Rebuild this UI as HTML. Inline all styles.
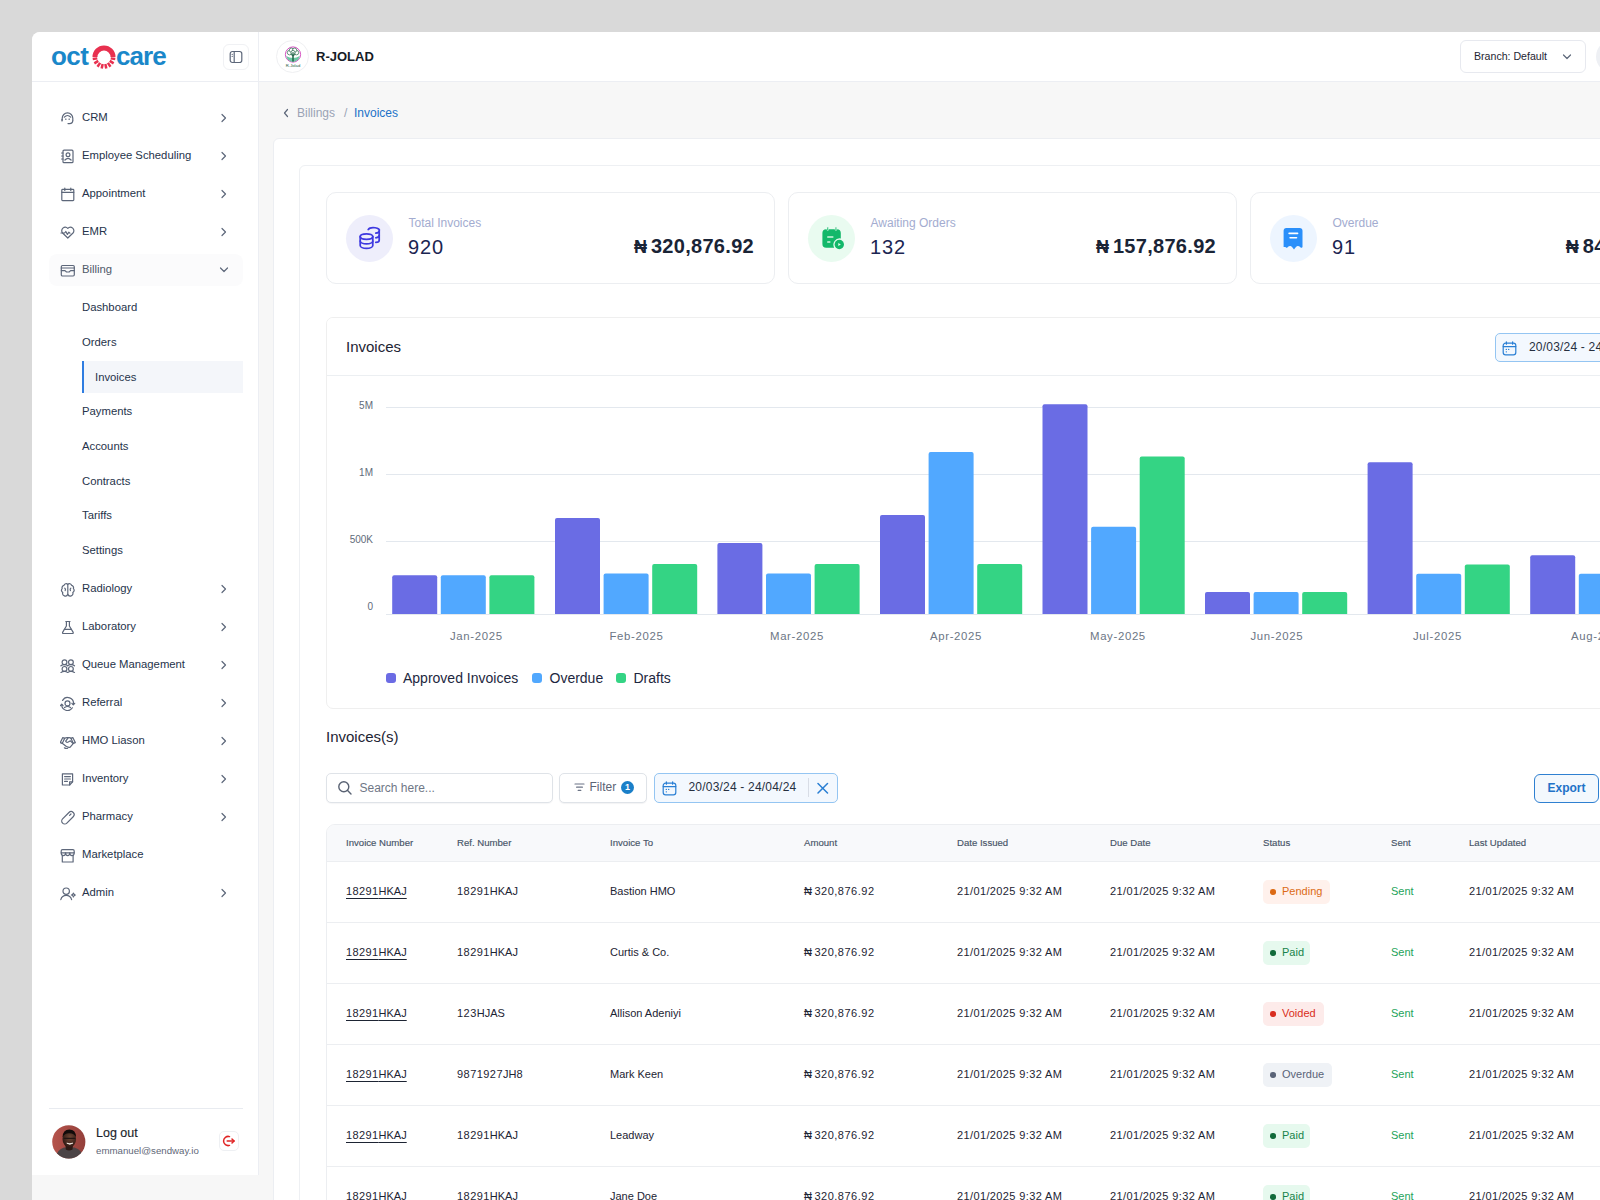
<!DOCTYPE html>
<html><head><meta charset="utf-8">
<style>
*{box-sizing:border-box;margin:0;padding:0}
html,body{width:1600px;height:1200px;overflow:hidden;background:#d9d9d9;font-family:"Liberation Sans",sans-serif;color:#1f2a3d}
body{position:relative}
.abs{position:absolute}
.t{position:absolute;white-space:nowrap;line-height:14px}
</style></head><body>

<div class="abs" style="left:32px;top:32px;width:1568px;height:1168px;background:#f7f7f7;border-top-left-radius:8px"></div>
<div class="abs" style="left:32px;top:32px;width:227px;height:1143px;background:#fff;border-right:1px solid #eceef3;border-top-left-radius:8px"></div>
<div class="abs" style="left:32px;top:81px;width:226px;height:1px;background:#eceef3"></div>
<div class="abs" style="left:259px;top:32px;width:1341px;height:50px;background:#fff;border-bottom:1px solid #eceef3"></div>
<div class="t" style="left:51px;top:43px;line-height:26px;font-size:26px;font-weight:bold;color:#1a87c9;letter-spacing:-0.6px">oct</div>
<div class="t" style="left:116px;top:43px;line-height:26px;font-size:26px;font-weight:bold;color:#1a87c9;letter-spacing:-0.9px">care</div>
<svg class="abs" style="left:92px;top:45px" width="24" height="24" viewBox="-12 -12 24 24"><path d="M-9 0 A9 9 0 0 1 9 0" stroke="#e8304f" stroke-width="5" fill="none"/><g><line x1="6.72" y1="1.36" x2="11.26" y2="2.08" stroke="#e8304f" stroke-width="2.5"/><line x1="5.76" y1="3.92" x2="9.65" y2="6.37" stroke="#e8304f" stroke-width="2.5"/><line x1="3.87" y1="5.89" x2="6.49" y2="9.67" stroke="#e8304f" stroke-width="2.5"/><line x1="1.36" y1="6.96" x2="2.29" y2="11.47" stroke="#e8304f" stroke-width="2.5"/><line x1="-1.36" y1="6.96" x2="-2.29" y2="11.47" stroke="#e8304f" stroke-width="2.5"/><line x1="-3.87" y1="5.89" x2="-6.49" y2="9.67" stroke="#e8304f" stroke-width="2.5"/><line x1="-5.76" y1="3.92" x2="-9.65" y2="6.37" stroke="#e8304f" stroke-width="2.5"/><line x1="-6.72" y1="1.36" x2="-11.26" y2="2.08" stroke="#e8304f" stroke-width="2.5"/></g></svg>
<div class="abs" style="left:223px;top:44px;width:26px;height:26px;border:1px solid #f0f1f4;border-radius:6px;background:#fff"></div>
<svg class="abs" style="left:229px;top:50px" width="14" height="14" viewBox="0 0 14 14" fill="none" stroke="#5d677a" stroke-width="1.2" stroke-linecap="round" stroke-linejoin="round" stroke-width="1.3" style="left:229px;top:50px" ><rect x="1.2" y="1.5" width="11.6" height="11" rx="2.2"/><line x1="5.2" y1="1.5" x2="5.2" y2="12.5"/><line x1="3.2" y1="4.3" x2="3.2" y2="4.4"/><line x1="3.2" y1="6.3" x2="3.2" y2="6.4"/></svg>
<div class="abs" style="left:49px;top:254px;width:194px;height:32px;border-radius:8px;background:#fbfbfc"></div>
<div class="t" style="left:82px;top:110px;font-size:11.3px;color:#26334b">CRM</div>
<svg class="abs" style="left:59.5px;top:110.8px" width="16" height="15" viewBox="0 0 16 15" fill="none" stroke="#5d677a" stroke-width="1.2" stroke-linecap="round" stroke-linejoin="round" ><path d="M2.2 9.2 V7.2 A5.3 5.3 0 0 1 12.8 7.2 V9.2"/><path d="M4.3 6.2 Q7.5 2.8 10.7 6.2"/><path d="M12.8 9.6 Q12.8 12.6 9.5 12.6 H8"/><path d="M2 8.5 V10"/><line x1="5.6" y1="8.2" x2="6" y2="8.2"/><line x1="9" y1="8.2" x2="9.4" y2="8.2"/></svg>
<svg class="abs" style="left:219px;top:112.5px" width="10" height="10" viewBox="0 0 10 10" fill="none" stroke="#5d677a" stroke-width="1.2" stroke-linecap="round" stroke-linejoin="round" stroke="#959cab" stroke-width="1.1"><path d="M3 1.5 L6.5 5 L3 8.5"/></svg>
<div class="t" style="left:82px;top:148px;font-size:11.3px;color:#26334b">Employee Scheduling</div>
<svg class="abs" style="left:59.5px;top:148.8px" width="16" height="15" viewBox="0 0 16 15" fill="none" stroke="#5d677a" stroke-width="1.2" stroke-linecap="round" stroke-linejoin="round" ><rect x="3" y="1.2" width="10" height="12.5" rx="1"/><circle cx="8" cy="5.8" r="1.9"/><path d="M4.9 11 Q8 7.6 11.1 11"/><line x1="1.6" y1="4" x2="3" y2="4"/><line x1="1.6" y1="7" x2="3" y2="7"/><line x1="1.6" y1="10" x2="3" y2="10"/></svg>
<svg class="abs" style="left:219px;top:150.5px" width="10" height="10" viewBox="0 0 10 10" fill="none" stroke="#5d677a" stroke-width="1.2" stroke-linecap="round" stroke-linejoin="round" stroke="#959cab" stroke-width="1.1"><path d="M3 1.5 L6.5 5 L3 8.5"/></svg>
<div class="t" style="left:82px;top:186px;font-size:11.3px;color:#26334b">Appointment</div>
<svg class="abs" style="left:59.5px;top:186.8px" width="16" height="15" viewBox="0 0 16 15" fill="none" stroke="#5d677a" stroke-width="1.2" stroke-linecap="round" stroke-linejoin="round" ><rect x="1.8" y="2.4" width="12" height="11.2" rx="0.8"/><line x1="1.8" y1="5.3" x2="13.8" y2="5.3"/><line x1="4.8" y1="1" x2="4.8" y2="3.4"/><line x1="10.8" y1="1" x2="10.8" y2="3.4"/></svg>
<svg class="abs" style="left:219px;top:188.5px" width="10" height="10" viewBox="0 0 10 10" fill="none" stroke="#5d677a" stroke-width="1.2" stroke-linecap="round" stroke-linejoin="round" stroke="#959cab" stroke-width="1.1"><path d="M3 1.5 L6.5 5 L3 8.5"/></svg>
<div class="t" style="left:82px;top:224px;font-size:11.3px;color:#26334b">EMR</div>
<svg class="abs" style="left:59.5px;top:224.8px" width="16" height="15" viewBox="0 0 16 15" fill="none" stroke="#5d677a" stroke-width="1.2" stroke-linecap="round" stroke-linejoin="round" ><path d="M7.8 13 L2.6 8 A3.2 3.2 0 0 1 7.8 3.4 A3.2 3.2 0 0 1 13 8 Z"/><path d="M1 8 H4.6 L5.8 6.5 L7.4 9.4 L8.8 7.2 L10 8.2"/></svg>
<svg class="abs" style="left:219px;top:226.5px" width="10" height="10" viewBox="0 0 10 10" fill="none" stroke="#5d677a" stroke-width="1.2" stroke-linecap="round" stroke-linejoin="round" stroke="#959cab" stroke-width="1.1"><path d="M3 1.5 L6.5 5 L3 8.5"/></svg>
<div class="t" style="left:82px;top:262px;font-size:11.3px;color:#4f5969">Billing</div>
<svg class="abs" style="left:59.5px;top:262.8px" width="16" height="15" viewBox="0 0 16 15" fill="none" stroke="#5d677a" stroke-width="1.2" stroke-linecap="round" stroke-linejoin="round" ><rect x="1.3" y="2.5" width="13" height="10.5" rx="1.2"/><line x1="1.3" y1="5" x2="14.3" y2="5"/><path d="M1.3 7.6 H5 L6.5 9 H9.1 L10.6 7.6 H14.3"/></svg>
<svg class="abs" style="left:219px;top:265px" width="10" height="10" viewBox="0 0 10 10" fill="none" stroke="#5d677a" stroke-width="1.2" stroke-linecap="round" stroke-linejoin="round" stroke="#959cab" stroke-width="1.1"><path d="M1.5 3 L5 6.5 L8.5 3"/></svg>
<div class="t" style="left:82px;top:581px;font-size:11.3px;color:#26334b">Radiology</div>
<svg class="abs" style="left:59.5px;top:581.8px" width="16" height="15" viewBox="0 0 16 15" fill="none" stroke="#5d677a" stroke-width="1.2" stroke-linecap="round" stroke-linejoin="round" ><path d="M7.8 2.4 A2.2 2.2 0 0 0 4 3.4 A2.4 2.4 0 0 0 2.2 6.6 A2.4 2.4 0 0 0 2.8 10.5 A2.4 2.4 0 0 0 7.8 12.3 Z"/><path d="M7.8 2.4 A2.2 2.2 0 0 1 11.6 3.4 A2.4 2.4 0 0 1 13.4 6.6 A2.4 2.4 0 0 1 12.8 10.5 A2.4 2.4 0 0 1 7.8 12.3"/><path d="M4.8 6.2 Q6 7 5.2 8.6"/><path d="M10.8 6.2 Q9.6 7 10.4 8.6"/></svg>
<svg class="abs" style="left:219px;top:583.5px" width="10" height="10" viewBox="0 0 10 10" fill="none" stroke="#5d677a" stroke-width="1.2" stroke-linecap="round" stroke-linejoin="round" stroke="#959cab" stroke-width="1.1"><path d="M3 1.5 L6.5 5 L3 8.5"/></svg>
<div class="t" style="left:82px;top:619px;font-size:11.3px;color:#26334b">Laboratory</div>
<svg class="abs" style="left:59.5px;top:619.8px" width="16" height="15" viewBox="0 0 16 15" fill="none" stroke="#5d677a" stroke-width="1.2" stroke-linecap="round" stroke-linejoin="round" ><path d="M5.8 1.5 H10 M6.4 1.5 V6 L2.6 12.4 A0.8 0.8 0 0 0 3.2 13.5 H12.6 A0.8 0.8 0 0 0 13.2 12.4 L9.4 6 V1.5"/><line x1="4.4" y1="9.4" x2="11.4" y2="9.4"/></svg>
<svg class="abs" style="left:219px;top:621.5px" width="10" height="10" viewBox="0 0 10 10" fill="none" stroke="#5d677a" stroke-width="1.2" stroke-linecap="round" stroke-linejoin="round" stroke="#959cab" stroke-width="1.1"><path d="M3 1.5 L6.5 5 L3 8.5"/></svg>
<div class="t" style="left:82px;top:657px;font-size:11.3px;color:#26334b">Queue Management</div>
<svg class="abs" style="left:59.5px;top:657.8px" width="16" height="15" viewBox="0 0 16 15" fill="none" stroke="#5d677a" stroke-width="1.2" stroke-linecap="round" stroke-linejoin="round" ><circle cx="4.5" cy="4.2" r="2.4"/><circle cx="10.9" cy="4.2" r="2.4"/><circle cx="4.5" cy="10.9" r="2.4"/><circle cx="10.9" cy="10.9" r="2.4"/><path d="M0.9 7.8 Q2.6 6.4 4.5 6.6 Q6.4 6.4 7.7 7.8 Q9 6.4 10.9 6.6 Q12.8 6.4 14.5 7.8"/><path d="M0.9 14.6 Q2.6 13.2 4.5 13.3 Q6.4 13.2 7.7 14.6 Q9 13.2 10.9 13.3 Q12.8 13.2 14.5 14.6"/></svg>
<svg class="abs" style="left:219px;top:659.5px" width="10" height="10" viewBox="0 0 10 10" fill="none" stroke="#5d677a" stroke-width="1.2" stroke-linecap="round" stroke-linejoin="round" stroke="#959cab" stroke-width="1.1"><path d="M3 1.5 L6.5 5 L3 8.5"/></svg>
<div class="t" style="left:82px;top:695px;font-size:11.3px;color:#26334b">Referral</div>
<svg class="abs" style="left:59.5px;top:695.8px" width="16" height="15" viewBox="0 0 16 15" fill="none" stroke="#5d677a" stroke-width="1.2" stroke-linecap="round" stroke-linejoin="round" ><circle cx="7.5" cy="7.4" r="2.5"/><path d="M4.5 11.6 Q7.5 9.4 10.5 11.6"/><path d="M2.6 4.4 A5.8 5.8 0 0 1 13.3 8.5"/><path d="M11.9 7.3 L13.3 8.9 L14.7 7.3"/><path d="M1.7 8.5 A5.8 5.8 0 0 0 12.4 11.8"/><path d="M0.4 9.7 L1.7 8.1 L3 9.7"/></svg>
<svg class="abs" style="left:219px;top:697.5px" width="10" height="10" viewBox="0 0 10 10" fill="none" stroke="#5d677a" stroke-width="1.2" stroke-linecap="round" stroke-linejoin="round" stroke="#959cab" stroke-width="1.1"><path d="M3 1.5 L6.5 5 L3 8.5"/></svg>
<div class="t" style="left:82px;top:733px;font-size:11.3px;color:#26334b">HMO Liason</div>
<svg class="abs" style="left:59.5px;top:733.8px" width="16" height="15" viewBox="0 0 16 15" fill="none" stroke="#5d677a" stroke-width="1.2" stroke-linecap="round" stroke-linejoin="round" ><path d="M0.3 8.6 L2.8 3.6 L4.6 4.4 L2.2 9.4 Z"/><path d="M15.3 8.6 L12.8 3.6 L11 4.4 L13.4 9.4 Z"/><path d="M4.5 4.3 Q6.5 3.2 8.3 3.7 Q9.9 3.2 11.1 4.3"/><path d="M2.2 9.2 L6.4 12.4 Q8.4 13.6 10.2 13.2 L13.4 9.4"/><path d="M8.3 3.7 L5.7 7.2 Q6.4 8.8 8.3 8 L10.4 6.8 L12.6 9"/><path d="M4.4 13.8 Q5.9 14.9 7.6 14.7"/></svg>
<svg class="abs" style="left:219px;top:735.5px" width="10" height="10" viewBox="0 0 10 10" fill="none" stroke="#5d677a" stroke-width="1.2" stroke-linecap="round" stroke-linejoin="round" stroke="#959cab" stroke-width="1.1"><path d="M3 1.5 L6.5 5 L3 8.5"/></svg>
<div class="t" style="left:82px;top:771px;font-size:11.3px;color:#26334b">Inventory</div>
<svg class="abs" style="left:59.5px;top:771.8px" width="16" height="15" viewBox="0 0 16 15" fill="none" stroke="#5d677a" stroke-width="1.2" stroke-linecap="round" stroke-linejoin="round" ><path d="M2.4 1.8 H12.6 V9.8 L9.6 13 H2.4 Z"/><path d="M9.6 13 V9.8 H12.6"/><line x1="4.6" y1="4.6" x2="10.4" y2="4.6"/><line x1="4.6" y1="7" x2="10.4" y2="7"/><line x1="4.6" y1="9.4" x2="7.4" y2="9.4"/></svg>
<svg class="abs" style="left:219px;top:773.5px" width="10" height="10" viewBox="0 0 10 10" fill="none" stroke="#5d677a" stroke-width="1.2" stroke-linecap="round" stroke-linejoin="round" stroke="#959cab" stroke-width="1.1"><path d="M3 1.5 L6.5 5 L3 8.5"/></svg>
<div class="t" style="left:82px;top:809px;font-size:11.3px;color:#26334b">Pharmacy</div>
<svg class="abs" style="left:59.5px;top:809.8px" width="16" height="15" viewBox="0 0 16 15" fill="none" stroke="#5d677a" stroke-width="1.2" stroke-linecap="round" stroke-linejoin="round" ><rect x="0.4" y="4.8" width="15" height="6" rx="3" transform="rotate(-45 7.9 7.8)"/><line x1="9.6" y1="5.4" x2="11" y2="4"/></svg>
<svg class="abs" style="left:219px;top:811.5px" width="10" height="10" viewBox="0 0 10 10" fill="none" stroke="#5d677a" stroke-width="1.2" stroke-linecap="round" stroke-linejoin="round" stroke="#959cab" stroke-width="1.1"><path d="M3 1.5 L6.5 5 L3 8.5"/></svg>
<div class="t" style="left:82px;top:847px;font-size:11.3px;color:#26334b">Marketplace</div>
<svg class="abs" style="left:59.5px;top:847.8px" width="16" height="15" viewBox="0 0 16 15" fill="none" stroke="#5d677a" stroke-width="1.2" stroke-linecap="round" stroke-linejoin="round" ><path d="M1.2 4.8 V3 Q1.2 1.7 2.5 1.7 H12.9 Q14.2 1.7 14.2 3 V4.8 Z"/><path d="M1.2 4.8 Q1.2 7.6 3.4 7.6 Q5.6 7.6 5.6 4.8 Q5.6 7.6 7.7 7.6 Q9.8 7.6 9.8 4.8 Q9.8 7.6 12 7.6 Q14.2 7.6 14.2 4.8"/><path d="M2.3 7.4 V14 H13.1 V7.4"/></svg>
<div class="t" style="left:82px;top:885px;font-size:11.3px;color:#26334b">Admin</div>
<svg class="abs" style="left:59.5px;top:885.8px" width="16" height="15" viewBox="0 0 16 15" fill="none" stroke="#5d677a" stroke-width="1.2" stroke-linecap="round" stroke-linejoin="round" ><circle cx="6.2" cy="5.2" r="3.2"/><path d="M0.8 13.6 Q2 9.4 6.2 9.4 Q10.4 9.4 11.6 13.6"/><circle cx="13.4" cy="9" r="1.2"/><path d="M13.4 7 V7.4 M13.4 10.6 V11 M11.4 9 H11.8 M15 9 H15.4"/></svg>
<svg class="abs" style="left:219px;top:887.5px" width="10" height="10" viewBox="0 0 10 10" fill="none" stroke="#5d677a" stroke-width="1.2" stroke-linecap="round" stroke-linejoin="round" stroke="#959cab" stroke-width="1.1"><path d="M3 1.5 L6.5 5 L3 8.5"/></svg>
<div class="abs" style="left:82px;top:361px;width:161px;height:32px;background:#f4f6fa;border-left:2.5px solid #2f7de1"></div>
<div class="t" style="left:82px;top:300px;font-size:11.3px;color:#26334b">Dashboard</div>
<div class="t" style="left:82px;top:335px;font-size:11.3px;color:#26334b">Orders</div>
<div class="t" style="left:95px;top:369.5px;font-size:11.3px;color:#26334b">Invoices</div>
<div class="t" style="left:82px;top:404px;font-size:11.3px;color:#26334b">Payments</div>
<div class="t" style="left:82px;top:439px;font-size:11.3px;color:#26334b">Accounts</div>
<div class="t" style="left:82px;top:473.5px;font-size:11.3px;color:#26334b">Contracts</div>
<div class="t" style="left:82px;top:508px;font-size:11.3px;color:#26334b">Tariffs</div>
<div class="t" style="left:82px;top:543px;font-size:11.3px;color:#26334b">Settings</div>
<div class="abs" style="left:49px;top:1108px;width:194px;height:1px;background:#e8ebf0"></div>
<svg class="abs" style="left:52px;top:1125px" width="34" height="34" viewBox="0 0 34 34">
<defs><clipPath id="av"><circle cx="16.8" cy="16.8" r="16.6"/></clipPath>
<linearGradient id="avg" x1="0" y1="0" x2="1" y2="0"><stop offset="0" stop-color="#b6544c"/><stop offset="1" stop-color="#933f3a"/></linearGradient>
<radialGradient id="fg" cx="0.55" cy="0.4" r="0.6"><stop offset="0" stop-color="#6e4634"/><stop offset="1" stop-color="#2e1914"/></radialGradient></defs>
<g clip-path="url(#av)"><rect width="34" height="34" fill="url(#avg)"/>
<path d="M3 34 Q5 24.5 12 22.6 L22.5 22.6 Q30 24.5 32 34 Z" fill="#4b4345"/>
<path d="M13.5 20 L21 20 L20.5 24.5 Q17 26.5 13.8 24.5 Z" fill="#2d1a15"/>
<ellipse cx="17.3" cy="14" rx="6.8" ry="8.6" fill="url(#fg)"/>
<path d="M10.6 12.2 Q10.8 4.6 17.3 4.6 Q23.8 4.6 24 12 Q22 8 17.3 8.2 Q12.6 8 10.6 12.2 Z" fill="#120b0a"/>
<path d="M11.6 13.4 H23.4" stroke="#241614" stroke-width="1.1"/>
<path d="M14.8 18.2 Q17.8 20.2 20.8 18.2 Q17.8 19.2 14.8 18.2 Z" fill="#f2ece6" stroke="#f2ece6" stroke-width="0.8"/>
</g></svg>
<div class="t" style="left:96px;top:1126px;font-size:12.5px;color:#1a1f2b;-webkit-text-stroke:0.15px #1a1f2b">Log out</div>
<div class="t" style="left:96px;top:1144px;font-size:9.7px;color:#5f6878">emmanuel@sendway.io</div>
<div class="abs" style="left:219px;top:1131px;width:20px;height:20px;border:1px solid #eef0f3;border-radius:5px;background:#fff"></div>
<svg class="abs" style="left:222px;top:1134px" width="14" height="14" viewBox="0 0 14 14" fill="none" stroke="#e02424" stroke-width="1.5" stroke-linecap="round"><path d="M7.5 2.6 A4.6 4.6 0 1 0 7.5 11.4"/><path d="M5.2 7 H12"/><path d="M10 5 L12 7 L10 9"/></svg>
<div class="abs" style="left:276px;top:40px;width:33px;height:33px;border-radius:50%;border:1px solid #eff0f2;background:#fff"></div>
<svg class="abs" style="left:284px;top:46px" width="18" height="22" viewBox="0 0 18 22">
<circle cx="9" cy="8.5" r="7.6" fill="#fff" stroke="#d44fc0" stroke-width="1"/>
<path d="M2.2 10 Q9 14 15.8 10 Q15 15 9 16 Q3 15 2.2 10Z" fill="#6cc7a3"/>
<path d="M9 15.5 V7" stroke="#23664a" stroke-width="1.1"/>
<g fill="#fff" stroke="#2a6a4c" stroke-width="0.7"><circle cx="5.6" cy="6.6" r="2.3"/><circle cx="12.4" cy="6.6" r="2.3"/><circle cx="7.4" cy="4.2" r="2.1"/><circle cx="10.6" cy="4.2" r="2.1"/><circle cx="9" cy="6.4" r="2"/></g>
<path d="M9 15.5 V6 M9 10 L6.5 8 M9 10 L11.5 8" stroke="#23664a" stroke-width="1" fill="none"/>
<text x="9" y="20.6" font-size="4.2" text-anchor="middle" fill="#2a5b45" font-family="Liberation Sans">R-Jolad</text>
</svg>
<div class="t" style="left:316px;top:50px;font-size:13px;font-weight:bold;color:#151b26">R-JOLAD</div>
<div class="abs" style="left:1460px;top:40px;width:126px;height:33px;border:1px solid #e7e9ef;border-radius:6px;background:#fff"></div>
<div class="t" style="left:1474px;top:49px;font-size:10.6px;color:#1e2532">Branch: Default</div>
<svg class="abs" style="left:1562px;top:52px" width="10" height="10" viewBox="0 0 10 10" fill="none" stroke="#5d677a" stroke-width="1.2" stroke-linecap="round" stroke-linejoin="round" stroke="#a3abbb" stroke-width="1"><path d="M1.5 3 L5 6.5 L8.5 3"/></svg>
<div class="abs" style="left:1596px;top:40px;width:33px;height:33px;border-radius:50%;background:#eef0f4"></div>
<svg class="abs" style="left:282px;top:108px" width="8" height="10" viewBox="0 0 8 10" fill="none" stroke="#5d677a" stroke-width="1.2" stroke-linecap="round" stroke-linejoin="round" stroke="#9aa3b5" stroke-width="1.2"><path d="M5.5 1.5 L2.5 5 L5.5 8.5"/></svg>
<div class="t" style="left:297px;top:106px;font-size:12px;color:#9aa3b5">Billings</div>
<div class="t" style="left:344px;top:106px;font-size:12px;color:#9aa3b5">/</div>
<div class="t" style="left:354px;top:106px;font-size:12px;color:#2272c8">Invoices</div>
<div class="abs" style="left:273px;top:138px;width:1400px;height:1200px;background:#fff;border:1px solid #eceef2;border-radius:6px"></div>
<div class="abs" style="left:299px;top:165px;width:1400px;height:1200px;background:#fff;border:1px solid #eef0f3;border-radius:6px"></div>
<div class="abs" style="left:326px;top:192px;width:449px;height:92px;border:1px solid #eceef1;border-radius:10px;background:#fff"></div>
<div class="abs" style="left:346px;top:214.5px;width:47px;height:47px;border-radius:50%;background:#eeeefb"></div>
<svg class="abs" style="left:357.5px;top:226px" width="24" height="24" viewBox="0 0 24 24" fill="none" stroke="#3f3ae0" stroke-width="1.75" stroke-linecap="round" stroke-linejoin="round"><ellipse cx="8.5" cy="10.6" rx="6.3" ry="2.8"/><path d="M2.2 10.6 V19.5 A6.3 2.9 0 0 0 14.8 19.5 V10.6"/><path d="M2.2 15 A6.3 2.9 0 0 0 14.8 15"/><path d="M10.2 3.6 A5.6 2.6 0 0 1 21.2 5 V14.2 A4 2.2 0 0 1 17.8 16.4"/><path d="M17.8 7.2 A4 2.2 0 0 0 21.2 5"/><path d="M17.8 11.8 A4 2.2 0 0 0 21.2 9.6"/></svg>
<div class="t" style="left:408.5px;top:216px;font-size:12px;color:#a3acd0">Total Invoices</div>
<div class="t" style="left:408px;top:235px;font-size:20px;line-height:24px;color:#1b2552;letter-spacing:0.9px">920</div>
<div class="t" style="left:454px;top:234px;width:300px;text-align:right;font-size:20px;line-height:24px;font-weight:bold;color:#1a2436;letter-spacing:0.3px"><span style="font-size:18px;letter-spacing:4px">&#8358;</span>320,876.92</div>
<div class="abs" style="left:788px;top:192px;width:449px;height:92px;border:1px solid #eceef1;border-radius:10px;background:#fff"></div>
<div class="abs" style="left:808px;top:214.5px;width:47px;height:47px;border-radius:50%;background:#e9fbf0"></div>
<svg class="abs" style="left:819.5px;top:226px" width="24" height="24" viewBox="0 0 24 24"><path d="M6.2 3.2 H17 A3.8 3.8 0 0 1 20.8 7 V12.4 A6.4 6.4 0 0 0 14.2 21.8 H6.2 A3.8 3.8 0 0 1 2.4 18 V7 A3.8 3.8 0 0 1 6.2 3.2 Z" fill="#13b86a"/><rect x="7" y="0.9" width="1.5" height="3.6" rx="0.75" fill="#13b86a" stroke="#e9fbf0" stroke-width="0.6"/><rect x="15.2" y="0.9" width="1.5" height="3.6" rx="0.75" fill="#13b86a" stroke="#e9fbf0" stroke-width="0.6"/><rect x="7.2" y="10.2" width="6.2" height="1.6" rx="0.3" fill="#d3f3e0"/><rect x="7.2" y="15.2" width="3.2" height="1.6" rx="0.3" fill="#d3f3e0"/><circle cx="19.3" cy="18.5" r="4.7" fill="#13b86a"/><path d="M18.3 16.9 L20.8 18.5 L18.3 20.1 Z" fill="#e9fbf0"/></svg>
<div class="t" style="left:870.5px;top:216px;font-size:12px;color:#a3acd0">Awaiting Orders</div>
<div class="t" style="left:870px;top:235px;font-size:20px;line-height:24px;color:#1b2552;letter-spacing:0.9px">132</div>
<div class="t" style="left:916px;top:234px;width:300px;text-align:right;font-size:20px;line-height:24px;font-weight:bold;color:#1a2436;letter-spacing:0.3px"><span style="font-size:18px;letter-spacing:4px">&#8358;</span>157,876.92</div>
<div class="abs" style="left:1250px;top:192px;width:449px;height:92px;border:1px solid #eceef1;border-radius:10px;background:#fff"></div>
<div class="abs" style="left:1270px;top:214.5px;width:47px;height:47px;border-radius:50%;background:#edf5ff"></div>
<svg class="abs" style="left:1281.5px;top:226px" width="24" height="24" viewBox="0 0 24 24"><path d="M4.4 1.9 H17.6 A2.9 2.9 0 0 1 20.5 4.8 V21 Q20 22.4 18.6 21.4 Q16.6 19.4 14.8 20.2 Q13.2 21.4 12 23.6 Q10.8 21.4 9.2 20.2 Q7.4 19.4 5.4 21.4 Q4 22.4 3.5 21 L1.6 21 V4.8 A2.9 2.9 0 0 1 4.4 1.9 Z" fill="#2a8ffa"/><rect x="6.3" y="6.6" width="10.1" height="1.6" rx="0.8" fill="#fff"/><rect x="7.3" y="11" width="8" height="1.6" rx="0.8" fill="#fff"/></svg>
<div class="t" style="left:1332.5px;top:216px;font-size:12px;color:#a3acd0">Overdue</div>
<div class="t" style="left:1332px;top:235px;font-size:20px;line-height:24px;color:#1b2552;letter-spacing:0.9px">91</div>
<div class="t" style="left:1374.5px;top:234px;width:300px;text-align:right;font-size:20px;line-height:24px;font-weight:bold;color:#1a2436;letter-spacing:0.3px"><span style="font-size:18px;letter-spacing:4px">&#8358;</span>84,876.92</div>
<div class="abs" style="left:326px;top:317px;width:1400px;height:392px;border:1px solid #efefef;border-radius:7px;background:#fff;overflow:hidden"><div class="abs" style="left:0;top:0;width:1400px;height:58px;background:#fff;border-bottom:1px solid #eceff2"></div></div>
<div class="t" style="left:346px;top:338px;font-size:15px;line-height:18px;color:#1d2433">Invoices</div>
<div class="abs" style="left:1495px;top:333px;width:200px;height:29px;border:1px solid #94c5f2;border-radius:5px;background:#f3f8fe"></div>
<svg class="abs" style="left:1502px;top:340.5px" width="15" height="15" viewBox="0 0 15 15" fill="none" stroke="#2a7fd4" stroke-width="1.2" stroke-linecap="round"><rect x="1.2" y="2.2" width="12.6" height="11.6" rx="2.4"/><line x1="1.2" y1="5.6" x2="13.8" y2="5.6"/><line x1="4.4" y1="0.8" x2="4.4" y2="3.2"/><line x1="10.6" y1="0.8" x2="10.6" y2="3.2"/><line x1="4.2" y1="8.4" x2="4.4" y2="8.4"/><line x1="4.2" y1="10.8" x2="4.4" y2="10.8"/><line x1="6.6" y1="8.4" x2="6.8" y2="8.4"/></svg>
<div class="t" style="left:1529px;top:340px;font-size:12px;color:#262f3f;letter-spacing:0.2px">20/03/24 - 24/04/24</div>
<div class="abs" style="left:386px;top:407px;width:1300px;height:1px;background:#e3e8ee"></div>
<div class="t" style="left:300px;top:400px;width:73px;text-align:right;font-size:10px;line-height:12px;color:#5f6b7a">5M</div>
<div class="abs" style="left:386px;top:474px;width:1300px;height:1px;background:#e3e8ee"></div>
<div class="t" style="left:300px;top:467px;width:73px;text-align:right;font-size:10px;line-height:12px;color:#5f6b7a">1M</div>
<div class="abs" style="left:386px;top:541px;width:1300px;height:1px;background:#e3e8ee"></div>
<div class="t" style="left:300px;top:534px;width:73px;text-align:right;font-size:10px;line-height:12px;color:#5f6b7a">500K</div>
<div class="abs" style="left:386px;top:614px;width:1300px;height:1px;background:#e3e8ee"></div>
<div class="t" style="left:300px;top:601px;width:73px;text-align:right;font-size:10px;line-height:12px;color:#5f6b7a">0</div>
<svg class="abs" style="left:0;top:0" width="1600" height="1200" viewBox="0 0 1600 1200"><path d="M392.2 614 V577.3 Q392.2 575.3 394.2 575.3 H435.2 Q437.2 575.3 437.2 577.3 V614 Z" fill="#6a6ce4"/><path d="M440.8 614 V577.3 Q440.8 575.3 442.8 575.3 H483.8 Q485.8 575.3 485.8 577.3 V614 Z" fill="#51a8ff"/><path d="M489.4 614 V577.3 Q489.4 575.3 491.4 575.3 H532.4 Q534.4 575.3 534.4 577.3 V614 Z" fill="#34d484"/><path d="M555.0 614 V520.1 Q555.0 518.1 557.0 518.1 H598.0 Q600.0 518.1 600.0 520.1 V614 Z" fill="#6a6ce4"/><path d="M603.6 614 V575.4 Q603.6 573.4 605.6 573.4 H646.6 Q648.6 573.4 648.6 575.4 V614 Z" fill="#51a8ff"/><path d="M652.2 614 V566.0 Q652.2 564.0 654.2 564.0 H695.2 Q697.2 564.0 697.2 566.0 V614 Z" fill="#34d484"/><path d="M717.4 614 V545.1 Q717.4 543.1 719.4 543.1 H760.4 Q762.4 543.1 762.4 545.1 V614 Z" fill="#6a6ce4"/><path d="M766.0 614 V575.4 Q766.0 573.4 768.0 573.4 H809.0 Q811.0 573.4 811.0 575.4 V614 Z" fill="#51a8ff"/><path d="M814.6 614 V566.0 Q814.6 564.0 816.6 564.0 H857.6 Q859.6 564.0 859.6 566.0 V614 Z" fill="#34d484"/><path d="M880.0 614 V517.0 Q880.0 515.0 882.0 515.0 H923.0 Q925.0 515.0 925.0 517.0 V614 Z" fill="#6a6ce4"/><path d="M928.6 614 V453.9 Q928.6 451.9 930.6 451.9 H971.6 Q973.6 451.9 973.6 453.9 V614 Z" fill="#51a8ff"/><path d="M977.2 614 V566.0 Q977.2 564.0 979.2 564.0 H1020.2 Q1022.2 564.0 1022.2 566.0 V614 Z" fill="#34d484"/><path d="M1042.5 614 V406.2 Q1042.5 404.2 1044.5 404.2 H1085.5 Q1087.5 404.2 1087.5 406.2 V614 Z" fill="#6a6ce4"/><path d="M1091.1 614 V528.8 Q1091.1 526.8 1093.1 526.8 H1134.1 Q1136.1 526.8 1136.1 528.8 V614 Z" fill="#51a8ff"/><path d="M1139.7 614 V458.6 Q1139.7 456.6 1141.7 456.6 H1182.7 Q1184.7 456.6 1184.7 458.6 V614 Z" fill="#34d484"/><path d="M1205.0 614 V594.0 Q1205.0 592.0 1207.0 592.0 H1248.0 Q1250.0 592.0 1250.0 594.0 V614 Z" fill="#6a6ce4"/><path d="M1253.6 614 V594.0 Q1253.6 592.0 1255.6 592.0 H1296.6 Q1298.6 592.0 1298.6 594.0 V614 Z" fill="#51a8ff"/><path d="M1302.2 614 V594.0 Q1302.2 592.0 1304.2 592.0 H1345.2 Q1347.2 592.0 1347.2 594.0 V614 Z" fill="#34d484"/><path d="M1367.6 614 V464.3 Q1367.6 462.3 1369.6 462.3 H1410.6 Q1412.6 462.3 1412.6 464.3 V614 Z" fill="#6a6ce4"/><path d="M1416.2 614 V575.8 Q1416.2 573.8 1418.2 573.8 H1459.2 Q1461.2 573.8 1461.2 575.8 V614 Z" fill="#51a8ff"/><path d="M1464.8 614 V566.6 Q1464.8 564.6 1466.8 564.6 H1507.8 Q1509.8 564.6 1509.8 566.6 V614 Z" fill="#34d484"/><path d="M1530.2 614 V557.3 Q1530.2 555.3 1532.2 555.3 H1573.2 Q1575.2 555.3 1575.2 557.3 V614 Z" fill="#6a6ce4"/><path d="M1578.8 614 V575.8 Q1578.8 573.8 1580.8 573.8 H1621.8 Q1623.8 573.8 1623.8 575.8 V614 Z" fill="#51a8ff"/><path d="M1627.4 614 V566.6 Q1627.4 564.6 1629.4 564.6 H1670.4 Q1672.4 564.6 1672.4 566.6 V614 Z" fill="#34d484"/></svg>
<div class="t" style="left:450px;top:629px;font-size:11.4px;color:#6c7685;letter-spacing:0.65px">Jan-2025</div>
<div class="t" style="left:609.5px;top:629px;font-size:11.4px;color:#6c7685;letter-spacing:0.65px">Feb-2025</div>
<div class="t" style="left:770px;top:629px;font-size:11.4px;color:#6c7685;letter-spacing:0.65px">Mar-2025</div>
<div class="t" style="left:930px;top:629px;font-size:11.4px;color:#6c7685;letter-spacing:0.65px">Apr-2025</div>
<div class="t" style="left:1090px;top:629px;font-size:11.4px;color:#6c7685;letter-spacing:0.65px">May-2025</div>
<div class="t" style="left:1250.5px;top:629px;font-size:11.4px;color:#6c7685;letter-spacing:0.65px">Jun-2025</div>
<div class="t" style="left:1413px;top:629px;font-size:11.4px;color:#6c7685;letter-spacing:0.65px">Jul-2025</div>
<div class="t" style="left:1571px;top:629px;font-size:11.4px;color:#6c7685;letter-spacing:0.65px">Aug-2025</div>
<div class="abs" style="left:386.4px;top:673px;width:10px;height:10px;border-radius:3px;background:#6b6be4"></div>
<div class="t" style="left:403px;top:670px;font-size:14px;line-height:17px;color:#1d2740">Approved Invoices</div>
<div class="abs" style="left:531.9px;top:673px;width:10px;height:10px;border-radius:3px;background:#51a8fe"></div>
<div class="t" style="left:549.5px;top:670px;font-size:14px;line-height:17px;color:#1d2740">Overdue</div>
<div class="abs" style="left:616.2px;top:673px;width:10px;height:10px;border-radius:3px;background:#34d484"></div>
<div class="t" style="left:633.5px;top:670px;font-size:14px;line-height:17px;color:#1d2740">Drafts</div>
<div class="t" style="left:326px;top:728px;font-size:15px;line-height:18px;color:#1d2433">Invoices(s)</div>
<div class="abs" style="left:326px;top:773px;width:227px;height:30px;border:1px solid #dfe3e8;border-radius:5px;background:#fff;box-shadow:0 1px 1px rgba(16,24,40,0.04)"></div>
<svg class="abs" style="left:337px;top:780px" width="16" height="16" viewBox="0 0 16 16" fill="none" stroke="#596273" stroke-width="1.4" stroke-linecap="round"><circle cx="6.8" cy="6.8" r="5"/><line x1="10.6" y1="10.6" x2="14" y2="14"/></svg>
<div class="t" style="left:359.5px;top:781px;font-size:12px;color:#6f7786">Search here...</div>
<div class="abs" style="left:559px;top:773px;width:88px;height:30px;border:1px solid #dfe3e8;border-radius:5px;background:#fff;box-shadow:0 1px 1px rgba(16,24,40,0.05)"></div>
<svg class="abs" style="left:574px;top:782px" width="11" height="11" viewBox="0 0 11 11" fill="none" stroke="#6b7385" stroke-width="1.2" stroke-linecap="round"><line x1="1" y1="2" x2="10" y2="2"/><line x1="2.6" y1="5.2" x2="8.4" y2="5.2"/><line x1="4.2" y1="8.4" x2="6.8" y2="8.4"/></svg>
<div class="t" style="left:589.5px;top:780px;font-size:12px;color:#5c6475">Filter</div>
<div class="abs" style="left:621px;top:781px;width:13px;height:13px;border-radius:50%;background:#1a7fc8;color:#fff;font-size:9px;line-height:13px;text-align:center;font-weight:bold">1</div>
<div class="abs" style="left:654px;top:773px;width:184px;height:30px;border:1px solid #94c5f2;border-radius:5px;background:#f3f8fe"></div>
<svg class="abs" style="left:661.5px;top:780.5px" width="15" height="15" viewBox="0 0 15 15" fill="none" stroke="#2a7fd4" stroke-width="1.2" stroke-linecap="round"><rect x="1.2" y="2.2" width="12.6" height="11.6" rx="2.4"/><line x1="1.2" y1="5.6" x2="13.8" y2="5.6"/><line x1="4.4" y1="0.8" x2="4.4" y2="3.2"/><line x1="10.6" y1="0.8" x2="10.6" y2="3.2"/><line x1="4.2" y1="8.4" x2="4.4" y2="8.4"/><line x1="4.2" y1="10.8" x2="4.4" y2="10.8"/><line x1="6.6" y1="8.4" x2="6.8" y2="8.4"/></svg>
<div class="t" style="left:688.5px;top:780px;font-size:12px;color:#262f3f;letter-spacing:0.2px">20/03/24 - 24/04/24</div>
<div class="abs" style="left:808px;top:778px;width:1px;height:19px;background:#d8dde6"></div>
<svg class="abs" style="left:816px;top:781px" width="13" height="13" viewBox="0 0 13 13" fill="none" stroke="#2a7fd4" stroke-width="1.5" stroke-linecap="round"><line x1="2" y1="2.5" x2="11.5" y2="12"/><line x1="11.5" y1="2.5" x2="2" y2="12"/></svg>
<div class="abs" style="left:1534px;top:774px;width:65px;height:29px;border:1.5px solid #2f80d1;border-radius:6px;background:#f3f8fd"></div>
<div class="t" style="left:1547.5px;top:781px;font-size:12px;font-weight:bold;color:#2272c8">Export</div>
<div class="abs" style="left:326px;top:824px;width:1400px;height:500px;border:1px solid #eceef1;border-radius:9px;background:#fff;overflow:hidden"><div class="abs" style="left:0;top:0;width:1400px;height:37px;background:#f8f9fb;border-bottom:1px solid #eceef1"></div></div>
<div class="t" style="left:346px;top:836.5px;font-size:9.6px;line-height:12px;color:#475467;-webkit-text-stroke:0.15px #475467">Invoice Number</div>
<div class="t" style="left:457px;top:836.5px;font-size:9.6px;line-height:12px;color:#475467;-webkit-text-stroke:0.15px #475467">Ref. Number</div>
<div class="t" style="left:610px;top:836.5px;font-size:9.6px;line-height:12px;color:#475467;-webkit-text-stroke:0.15px #475467">Invoice To</div>
<div class="t" style="left:804px;top:836.5px;font-size:9.6px;line-height:12px;color:#475467;-webkit-text-stroke:0.15px #475467">Amount</div>
<div class="t" style="left:957px;top:836.5px;font-size:9.6px;line-height:12px;color:#475467;-webkit-text-stroke:0.15px #475467">Date Issued</div>
<div class="t" style="left:1110px;top:836.5px;font-size:9.6px;line-height:12px;color:#475467;-webkit-text-stroke:0.15px #475467">Due Date</div>
<div class="t" style="left:1263px;top:836.5px;font-size:9.6px;line-height:12px;color:#475467;-webkit-text-stroke:0.15px #475467">Status</div>
<div class="t" style="left:1391px;top:836.5px;font-size:9.6px;line-height:12px;color:#475467;-webkit-text-stroke:0.15px #475467">Sent</div>
<div class="t" style="left:1469px;top:836.5px;font-size:9.6px;line-height:12px;color:#475467;-webkit-text-stroke:0.15px #475467">Last Updated</div>
<div class="t" style="left:346px;top:884px;font-size:11px;color:#1d2433;text-decoration:underline;text-underline-offset:3px;text-decoration-thickness:1px"><span style="letter-spacing:0.4px">18291</span>HKAJ</div>
<div class="t" style="left:457px;top:884px;font-size:11px;color:#1d2433"><span style="letter-spacing:0.45px">18291</span>HKAJ</div>
<div class="t" style="left:610px;top:884px;font-size:11px;color:#1d2433">Bastion HMO</div>
<div class="t" style="left:804px;top:884px;font-size:11px;color:#1d2433;letter-spacing:0.5px"><span style="letter-spacing:2.5px">&#8358;</span>320,876.92</div>
<div class="t" style="left:957px;top:884px;font-size:11px;color:#1d2433;letter-spacing:0.38px">21/01/2025 9:32 AM</div>
<div class="t" style="left:1110px;top:884px;font-size:11px;color:#1d2433;letter-spacing:0.38px">21/01/2025 9:32 AM</div>
<div class="abs" style="left:1263px;top:879.5px;width:67px;height:24px;border-radius:5px;background:#fff1ec"></div>
<div class="abs" style="left:1270px;top:889px;width:5.5px;height:5.5px;border-radius:50%;background:#dc6a14"></div>
<div class="t" style="left:1282px;top:884px;font-size:11px;color:#dc6a14">Pending</div>
<div class="t" style="left:1391px;top:884px;font-size:11px;color:#23a35a">Sent</div>
<div class="t" style="left:1469px;top:884px;font-size:11px;color:#1d2433;letter-spacing:0.38px">21/01/2025 9:32 AM</div>
<div class="abs" style="left:327px;top:922px;width:1300px;height:1px;background:#eceef1"></div>
<div class="t" style="left:346px;top:945px;font-size:11px;color:#1d2433;text-decoration:underline;text-underline-offset:3px;text-decoration-thickness:1px"><span style="letter-spacing:0.4px">18291</span>HKAJ</div>
<div class="t" style="left:457px;top:945px;font-size:11px;color:#1d2433"><span style="letter-spacing:0.45px">18291</span>HKAJ</div>
<div class="t" style="left:610px;top:945px;font-size:11px;color:#1d2433">Curtis &amp; Co.</div>
<div class="t" style="left:804px;top:945px;font-size:11px;color:#1d2433;letter-spacing:0.5px"><span style="letter-spacing:2.5px">&#8358;</span>320,876.92</div>
<div class="t" style="left:957px;top:945px;font-size:11px;color:#1d2433;letter-spacing:0.38px">21/01/2025 9:32 AM</div>
<div class="t" style="left:1110px;top:945px;font-size:11px;color:#1d2433;letter-spacing:0.38px">21/01/2025 9:32 AM</div>
<div class="abs" style="left:1263px;top:940.5px;width:47px;height:24px;border-radius:5px;background:#e6f9ee"></div>
<div class="abs" style="left:1270px;top:950px;width:5.5px;height:5.5px;border-radius:50%;background:#116b3a"></div>
<div class="t" style="left:1282px;top:945px;font-size:11px;color:#17834a">Paid</div>
<div class="t" style="left:1391px;top:945px;font-size:11px;color:#23a35a">Sent</div>
<div class="t" style="left:1469px;top:945px;font-size:11px;color:#1d2433;letter-spacing:0.38px">21/01/2025 9:32 AM</div>
<div class="abs" style="left:327px;top:983px;width:1300px;height:1px;background:#eceef1"></div>
<div class="t" style="left:346px;top:1006px;font-size:11px;color:#1d2433;text-decoration:underline;text-underline-offset:3px;text-decoration-thickness:1px"><span style="letter-spacing:0.4px">18291</span>HKAJ</div>
<div class="t" style="left:457px;top:1006px;font-size:11px;color:#1d2433"><span style="letter-spacing:0.45px">123</span>HJAS</div>
<div class="t" style="left:610px;top:1006px;font-size:11px;color:#1d2433">Allison Adeniyi</div>
<div class="t" style="left:804px;top:1006px;font-size:11px;color:#1d2433;letter-spacing:0.5px"><span style="letter-spacing:2.5px">&#8358;</span>320,876.92</div>
<div class="t" style="left:957px;top:1006px;font-size:11px;color:#1d2433;letter-spacing:0.38px">21/01/2025 9:32 AM</div>
<div class="t" style="left:1110px;top:1006px;font-size:11px;color:#1d2433;letter-spacing:0.38px">21/01/2025 9:32 AM</div>
<div class="abs" style="left:1263px;top:1001.5px;width:61px;height:24px;border-radius:5px;background:#fdebea"></div>
<div class="abs" style="left:1270px;top:1011px;width:5.5px;height:5.5px;border-radius:50%;background:#d92d20"></div>
<div class="t" style="left:1282px;top:1006px;font-size:11px;color:#d92d20">Voided</div>
<div class="t" style="left:1391px;top:1006px;font-size:11px;color:#23a35a">Sent</div>
<div class="t" style="left:1469px;top:1006px;font-size:11px;color:#1d2433;letter-spacing:0.38px">21/01/2025 9:32 AM</div>
<div class="abs" style="left:327px;top:1044px;width:1300px;height:1px;background:#eceef1"></div>
<div class="t" style="left:346px;top:1067px;font-size:11px;color:#1d2433;text-decoration:underline;text-underline-offset:3px;text-decoration-thickness:1px"><span style="letter-spacing:0.4px">18291</span>HKAJ</div>
<div class="t" style="left:457px;top:1067px;font-size:11px;color:#1d2433"><span style="letter-spacing:0.45px">9871927</span>JH<span style="letter-spacing:0.45px">8</span></div>
<div class="t" style="left:610px;top:1067px;font-size:11px;color:#1d2433">Mark Keen</div>
<div class="t" style="left:804px;top:1067px;font-size:11px;color:#1d2433;letter-spacing:0.5px"><span style="letter-spacing:2.5px">&#8358;</span>320,876.92</div>
<div class="t" style="left:957px;top:1067px;font-size:11px;color:#1d2433;letter-spacing:0.38px">21/01/2025 9:32 AM</div>
<div class="t" style="left:1110px;top:1067px;font-size:11px;color:#1d2433;letter-spacing:0.38px">21/01/2025 9:32 AM</div>
<div class="abs" style="left:1263px;top:1062.5px;width:69px;height:24px;border-radius:5px;background:#eff2f6"></div>
<div class="abs" style="left:1270px;top:1072px;width:5.5px;height:5.5px;border-radius:50%;background:#5a6478"></div>
<div class="t" style="left:1282px;top:1067px;font-size:11px;color:#5a6478">Overdue</div>
<div class="t" style="left:1391px;top:1067px;font-size:11px;color:#23a35a">Sent</div>
<div class="t" style="left:1469px;top:1067px;font-size:11px;color:#1d2433;letter-spacing:0.38px">21/01/2025 9:32 AM</div>
<div class="abs" style="left:327px;top:1105px;width:1300px;height:1px;background:#eceef1"></div>
<div class="t" style="left:346px;top:1128px;font-size:11px;color:#1d2433;text-decoration:underline;text-underline-offset:3px;text-decoration-thickness:1px"><span style="letter-spacing:0.4px">18291</span>HKAJ</div>
<div class="t" style="left:457px;top:1128px;font-size:11px;color:#1d2433"><span style="letter-spacing:0.45px">18291</span>HKAJ</div>
<div class="t" style="left:610px;top:1128px;font-size:11px;color:#1d2433">Leadway</div>
<div class="t" style="left:804px;top:1128px;font-size:11px;color:#1d2433;letter-spacing:0.5px"><span style="letter-spacing:2.5px">&#8358;</span>320,876.92</div>
<div class="t" style="left:957px;top:1128px;font-size:11px;color:#1d2433;letter-spacing:0.38px">21/01/2025 9:32 AM</div>
<div class="t" style="left:1110px;top:1128px;font-size:11px;color:#1d2433;letter-spacing:0.38px">21/01/2025 9:32 AM</div>
<div class="abs" style="left:1263px;top:1123.5px;width:47px;height:24px;border-radius:5px;background:#e6f9ee"></div>
<div class="abs" style="left:1270px;top:1133px;width:5.5px;height:5.5px;border-radius:50%;background:#116b3a"></div>
<div class="t" style="left:1282px;top:1128px;font-size:11px;color:#17834a">Paid</div>
<div class="t" style="left:1391px;top:1128px;font-size:11px;color:#23a35a">Sent</div>
<div class="t" style="left:1469px;top:1128px;font-size:11px;color:#1d2433;letter-spacing:0.38px">21/01/2025 9:32 AM</div>
<div class="abs" style="left:327px;top:1166px;width:1300px;height:1px;background:#eceef1"></div>
<div class="t" style="left:346px;top:1189px;font-size:11px;color:#1d2433;text-decoration:underline;text-underline-offset:3px;text-decoration-thickness:1px"><span style="letter-spacing:0.4px">18291</span>HKAJ</div>
<div class="t" style="left:457px;top:1189px;font-size:11px;color:#1d2433"><span style="letter-spacing:0.45px">18291</span>HKAJ</div>
<div class="t" style="left:610px;top:1189px;font-size:11px;color:#1d2433">Jane Doe</div>
<div class="t" style="left:804px;top:1189px;font-size:11px;color:#1d2433;letter-spacing:0.5px"><span style="letter-spacing:2.5px">&#8358;</span>320,876.92</div>
<div class="t" style="left:957px;top:1189px;font-size:11px;color:#1d2433;letter-spacing:0.38px">21/01/2025 9:32 AM</div>
<div class="t" style="left:1110px;top:1189px;font-size:11px;color:#1d2433;letter-spacing:0.38px">21/01/2025 9:32 AM</div>
<div class="abs" style="left:1263px;top:1184.5px;width:47px;height:24px;border-radius:5px;background:#e6f9ee"></div>
<div class="abs" style="left:1270px;top:1194px;width:5.5px;height:5.5px;border-radius:50%;background:#116b3a"></div>
<div class="t" style="left:1282px;top:1189px;font-size:11px;color:#17834a">Paid</div>
<div class="t" style="left:1391px;top:1189px;font-size:11px;color:#23a35a">Sent</div>
<div class="t" style="left:1469px;top:1189px;font-size:11px;color:#1d2433;letter-spacing:0.38px">21/01/2025 9:32 AM</div>
</body></html>
